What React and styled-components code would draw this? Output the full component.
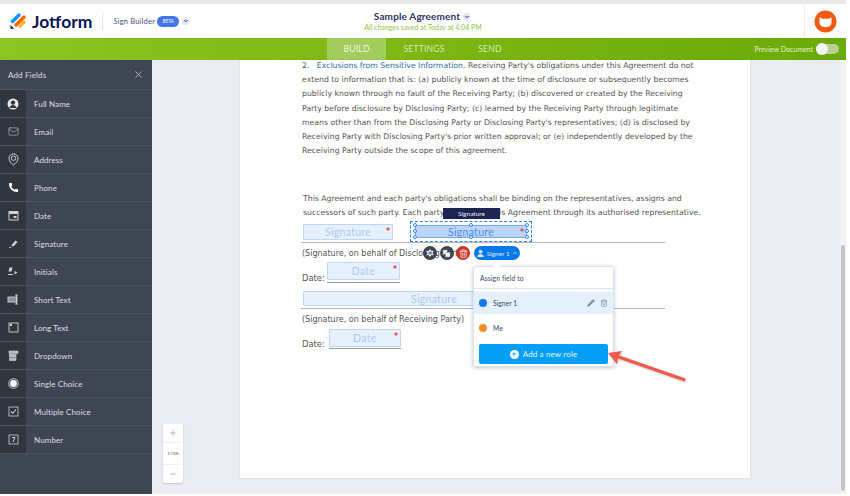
import React from "react";
import styled, { createGlobalStyle } from "styled-components";
import { Plus, Minus, X, Mail, Phone, Pencil, Trash2, User, Copy, Settings, ChevronDown, ChevronUp } from "lucide-react";

const GlobalStyle = createGlobalStyle`
    html, body {
        margin: 0;
        background: #fff;
        overflow: hidden;
    }
    * { box-sizing: border-box; }
`;

const Page = styled.div`
    width: 846px;
    height: 494px;
    display: flex;
    flex-direction: column;
    font-family: Lato, "Noto Sans", sans-serif;
    overflow: hidden;
`;

const TopStrip = styled.div`
    height: 4px;
    background: #e9e9ec;
    flex: none;
`;

const Header = styled.header`
    height: 34px;
    flex: none;
    display: grid;
    grid-template-columns: 1fr auto 1fr;
    align-items: center;
    background: #fff;
`;

const Brand = styled.div`
    display: flex;
    align-items: center;
    padding-left: 9px;
`;

const LogoName = styled.span`
    font-size: 17.5px;
    font-weight: 700;
    color: #0a1551;
    margin-left: 5px;
    letter-spacing: 0;
`;

const Divider = styled.span`
    width: 1px;
    height: 17px;
    background: #e3e5ee;
    margin: 0 10px;
`;

const Product = styled.span`
    font-size: 7.5px;
    color: #4c5478;
    letter-spacing: 0.2px;
`;

const BetaBadge = styled.span`
    width: 22px;
    height: 11px;
    margin-left: 2px;
    border-radius: 6px;
    background: #4277ea;
    color: #fff;
    font-size: 5px;
    font-style: italic;
    display: flex;
    align-items: center;
    justify-content: center;
`;

const RoundChevron = styled.span`
    width: 7px;
    height: 7px;
    margin-left: 3px;
    border-radius: 50%;
    background: #e0e3f0;
    color: #0a1551;
    display: inline-flex;
    align-items: center;
    justify-content: center;
`;

const TitleBlock = styled.div`
    text-align: center;
`;

const TitleRow = styled.div`
    display: flex;
    align-items: center;
    justify-content: center;
    font-size: 10px;
    font-weight: 700;
    color: #2f3565;
    letter-spacing: 0.15px;
    line-height: 13px;
    margin-left: -2px;
`;

const Saved = styled.div`
    font-size: 7px;
    line-height: 9px;
    color: #8cc548;
`;

const HeaderEnd = styled.div`
    justify-self: end;
    align-self: stretch;
    width: 42px;
    border-left: 1px solid #eeeef4;
    display: flex;
    align-items: center;
    justify-content: center;
    padding-top: 1px;
`;

const GreenBar = styled.nav`
    height: 22px;
    flex: none;
    display: flex;
    align-items: stretch;
    padding-left: 327px;
    background: linear-gradient(90deg, #8cc522 0%, #7db615 50%, #6aaa08 100%);
`;

const Tab = styled.div`
    width: ${(p) => p.$w}px;
    display: flex;
    align-items: center;
    justify-content: center;
    font-size: 8.5px;
    letter-spacing: 0.25px;
    color: ${(p) => (p.$active ? "#f1f7e2" : "#d6e9ad")};
    background: ${(p) => (p.$active ? "#a2cd5c" : "transparent")};
`;

const PreviewGroup = styled.div`
    margin-left: auto;
    display: flex;
    align-items: center;
    padding-right: 7px;
    font-size: 7px;
    color: #e6f1d0;
`;

const Toggle = styled.span`
    width: 23px;
    height: 10px;
    margin-left: 3px;
    border-radius: 6px;
    background: #b9cf93;
    display: flex;
    align-items: center;
    &::before {
        content: "";
        width: 12px;
        height: 12px;
        border-radius: 50%;
        background: #f2f3fb;
    }
`;

const Main = styled.main`
    flex: 1;
    min-height: 0;
    display: flex;
`;

const Sidebar = styled.aside`
    width: 152px;
    flex: none;
    background: #3f4653;
    color: #dcdee2;
`;

const SidebarHead = styled.div`
    height: 30px;
    display: flex;
    align-items: center;
    justify-content: space-between;
    padding: 0 8px;
    font-size: 8px;
    letter-spacing: 0.15px;
    border-bottom: 1px solid #4a515e;
`;

const FieldRow = styled.div`
    height: 28px;
    display: flex;
    align-items: center;
    font-size: 8px;
    letter-spacing: 0.1px;
    border-bottom: 1px solid #4a515e;
`;

const FieldIcon = styled.span`
    width: 26px;
    align-self: stretch;
    flex: none;
    background: #30353e;
    display: flex;
    align-items: center;
    justify-content: center;
    margin-right: 8px;
    color: #cfd1d6;
`;

const Canvas = styled.section`
    position: relative;
    flex: 1;
    background: #ebecf1;
    padding-left: 88px;
    display: flex;
`;

const Sheet = styled.article`
    position: relative;
    width: 510px;
    height: 418px;
    background: #fff;
    padding: 0 54px 0 62px;
    box-shadow: 0 0 2px rgba(80, 85, 100, 0.15);
    font-family: "DejaVu Sans", Verdana, sans-serif;
    font-size: 7.75px;
    color: #555;
`;

const Clause = styled.p`
    margin: -1px 0 34px 0;
    line-height: 14.17px;
    white-space: nowrap;
    height: 99px;
`;

const ClauseTitle = styled.span`
    color: #2f6f9f;
`;

const Paragraph = styled.p`
    margin: 0 -10px 4px 1px;
    line-height: 14px;
    white-space: nowrap;
`;

const SignRow = styled.div`
    display: flex;
    gap: 17px;
    height: ${(p) => p.$h}px;
    padding-left: 2px;
    border-bottom: 1.5px solid #b5b5b5;
    margin-left: -1px;
    width: 364px;
`;

const FieldBox = styled.div`
    position: relative;
    flex: none;
    width: ${(p) => p.$w || 90}px;
    height: ${(p) => p.$h || 16}px;
    background: ${(p) => (p.$selected ? "#bcd6fb" : "#e7f1fe")};
    border: 1px solid ${(p) => (p.$selected ? "#77a8ee" : "#bdd7f9")};
    border-radius: 1px;
    color: ${(p) => (p.$selected ? "#4f8fe6" : "#a9cbf6")};
    font-family: Lato, "Noto Sans", sans-serif;
    font-size: 10.5px;
    letter-spacing: 0.3px;
    display: flex;
    align-items: center;
    justify-content: center;
    ${(p) =>
        p.$required &&
        `&::after {
            content: "*";
            position: absolute;
            top: 2px;
            right: 1px;
            color: #e5383f;
            font-size: 12px;
            font-weight: 700;
            line-height: 10px;
        }`}
`;

const SelectFrame = styled.div`
    position: relative;
    margin-top: -3px;
    width: 122px;
    height: 21px;
    padding: 3px 4px;
    border: 1px dashed #2c86f5;
`;

const Handle = styled.i`
    position: absolute;
    width: 4px;
    height: 4px;
    border-radius: 50%;
    background: #fff;
    border: 1px solid #2c86f5;
    left: ${(p) => p.$x}px;
    top: ${(p) => p.$y}px;
`;

const Caption = styled.div`
    margin: 5px 0 2px 0;
    font-size: 8px;
    line-height: 12px;
    height: 12px;
    white-space: nowrap;
`;

const DateRow = styled.div`
    display: flex;
    align-items: flex-end;
    gap: ${(p) => p.$gap}px;
    height: 21px;
    margin-bottom: ${(p) => p.$after || 0}px;
    font-size: 8.4px;
`;

const DateSlot = styled.div`
    border-bottom: 1px solid #9a9a9a;
    padding-bottom: ${(p) => p.$pad}px;
`;

const Tooltip = styled.div`
    position: absolute;
    left: 203px;
    top: 148px;
    width: 57px;
    height: 11px;
    background: #1d2450;
    color: #e8eaf4;
    font-family: Lato, sans-serif;
    font-size: 6.5px;
    display: flex;
    align-items: center;
    justify-content: center;
`;

const ActionBar = styled.div`
    position: absolute;
    left: 183px;
    top: 186px;
    display: flex;
    align-items: center;
    gap: 2.6px;
`;

const RoundAction = styled.span`
    width: 14px;
    height: 14px;
    border-radius: 50%;
    background: ${(p) => p.$bg || "#3f4653"};
    color: #fff;
    display: flex;
    align-items: center;
    justify-content: center;
`;

const SignerPill = styled.span`
    width: 46px;
    height: 14px;
    margin-left: 1px;
    border-radius: 7px;
    background: #0b78e8;
    color: #dcebff;
    font-family: Lato, sans-serif;
    font-size: 6.5px;
    display: flex;
    align-items: center;
    justify-content: center;
    gap: 2px;
`;

const Popover = styled.div`
    position: absolute;
    left: 233px;
    top: 206px;
    width: 141px;
    height: 101px;
    background: #fff;
    border: 1px solid #dfe2ea;
    border-radius: 2px;
    box-shadow: 0 1px 4px rgba(60, 70, 100, 0.3);
    font-family: Lato, sans-serif;
    font-size: 6.8px;
    color: #3e4766;
    &::before {
        content: "";
        position: absolute;
        left: 21px;
        top: -3px;
        width: 5px;
        height: 5px;
        background: #fff;
        transform: rotate(45deg);
    }
`;

const PopoverHead = styled.div`
    height: 22px;
    padding-left: 6px;
    display: flex;
    align-items: center;
    border-bottom: 1px solid #dfe2ea;
    letter-spacing: 0.1px;
`;

const RoleRow = styled.div`
    height: ${(p) => p.$h}px;
    margin-top: ${(p) => p.$top || 0}px;
    padding: 0 5px;
    display: flex;
    align-items: center;
    background: ${(p) => (p.$active ? "#e5f0fd" : "transparent")};
`;

const RoleDot = styled.span`
    width: 8px;
    height: 8px;
    border-radius: 50%;
    margin-right: 6px;
    background: ${(p) => p.$color};
`;

const RoleTools = styled.span`
    margin-left: auto;
    display: flex;
    gap: 5px;
    color: #8a8e98;
`;

const AddRole = styled.div`
    margin: 3px 5px 0 5px;
    height: 20px;
    background: #079ff5;
    border-radius: 2px;
    color: #e6f5ff;
    font-size: 8px;
    letter-spacing: 0.15px;
    display: flex;
    align-items: center;
    justify-content: center;
    gap: 4px;
`;

const PlusDisc = styled.span`
    width: 9px;
    height: 9px;
    border-radius: 50%;
    background: #fff;
    color: #079ff5;
    display: flex;
    align-items: center;
    justify-content: center;
`;

const Arrow = styled.svg`
    position: absolute;
    left: 364px;
    top: 285px;
    overflow: visible;
    filter: drop-shadow(1px 1px 1px rgba(70, 60, 60, 0.35));
`;

const ZoomBox = styled.div`
    position: absolute;
    left: 11px;
    top: 364px;
    width: 20px;
    height: 59px;
    background: #fff;
    border-radius: 2px;
    box-shadow: 0 1px 2px rgba(70, 75, 95, 0.25);
    color: #9297a8;
    display: flex;
    flex-direction: column;
`;

const ZoomCell = styled.div`
    flex: ${(p) => p.$grow || 1};
    display: flex;
    align-items: center;
    justify-content: center;
    font-size: 4.5px;
    color: ${(p) => (p.$label ? "#555a66" : "#9297a8")};
    border-bottom: ${(p) => (p.$line ? "1px solid #f0f0f4" : "none")};
`;

const ScrollTrack = styled.div`
    position: absolute;
    right: 0;
    top: 0;
    bottom: 0;
    width: 6px;
    background: #f3f3f6;
    display: flex;
    flex-direction: column;
    justify-content: flex-end;
    padding: 0 1px 3px 1px;
`;

const ScrollThumb = styled.div`
    height: 246px;
    background: #c4c5c9;
    border-radius: 2px;
`;

const JotformLogo = () => (
    <svg width="18" height="18" viewBox="0 0 18 18">
        <path d="M3.5 9.5 10 3" stroke="#0099ff" strokeWidth="3.4" strokeLinecap="round" />
        <path d="M7 13 15 5" stroke="#ff6100" strokeWidth="3.4" strokeLinecap="round" />
        <path d="M11 14 15 10" stroke="#ffb629" strokeWidth="3.4" strokeLinecap="round" />
        <path d="M1.5 13v3.2a.6.6 0 0 0 .6.6h3.2z" fill="#0a1551" />
    </svg>
);

const CatAvatar = () => (
    <svg width="23" height="23" viewBox="0 0 23 23">
        <circle cx="11.5" cy="11.5" r="11" fill="#f05a13" />
        <path d="M5.500 7.500 8.500 8.800h6l3-1.300v5.300c0 2.700-2.700 4.400-6 4.400s-6-1.700-6-4.400z" fill="#fff" />
    </svg>
);

const PersonDisc = () => (
    <svg width="12" height="12" viewBox="0 0 12 12">
        <circle cx="6" cy="6" r="5.500" fill="#e8e9ec" />
        <circle cx="6" cy="4.600" r="2.200" fill="#30353e" />
        <path d="M2.500 10c.5-2.200 2-3 3.500-3s3 .8 3.500 3z" fill="#30353e" />
    </svg>
);

const PinIcon = () => (
    <svg width="11" height="13" viewBox="0 0 11 13" fill="none" stroke="currentColor">
        <path d="M5.500 12C3 10 1 8 1 5.400a4.500 4.500 0 0 1 9 0C10 8 8 10 5.500 12z" />
        <circle cx="5.500" cy="5.200" r="2.200" />
    </svg>
);

const CalendarIcon = () => (
    <svg width="11" height="11" viewBox="0 0 11 11">
        <rect x="1" y="1.500" width="9" height="8.500" fill="none" stroke="currentColor" />
        <rect x="1" y="1.500" width="9" height="2.500" fill="currentColor" />
        <rect x="5.500" y="6" width="3" height="2" fill="currentColor" />
    </svg>
);

const SignIcon = () => (
    <svg width="11" height="11" viewBox="0 0 11 11" fill="currentColor">
        <path d="M4 6.500 7.500 2.500l2 1.500-3.500 4-2.500.5z" />
        <path d="M1 9.500h2" stroke="currentColor" strokeWidth="0.8" />
    </svg>
);

const InitialsIcon = () => (
    <svg width="12" height="11" viewBox="0 0 12 11" fill="currentColor">
        <path d="M2.500 1.500h3l-1 4h-3zM7.500 5l3 1.500-3 2z" />
        <path d="M1 8.500h5" stroke="currentColor" strokeWidth="1" />
    </svg>
);

const ShortTextIcon = () => (
    <svg width="12" height="11" viewBox="0 0 12 11" fill="none" stroke="currentColor" strokeWidth="0.9">
        <rect x="1" y="3" width="9" height="5" fill="#8b8e95" />
        <path d="M9.500 1v9M8 1h3M8 10h3" />
    </svg>
);

const LongTextIcon = () => (
    <svg width="11" height="11" viewBox="0 0 11 11" fill="none" stroke="currentColor" strokeWidth="0.9">
        <rect x="1" y="1" width="9" height="9" />
        <rect x="2" y="2" width="2" height="2" fill="currentColor" stroke="none" />
    </svg>
);

const DropdownIcon = () => (
    <svg width="11" height="11" viewBox="0 0 11 11" fill="#b4b6bb" stroke="currentColor" strokeWidth="0.6">
        <rect x="1" y="1" width="9" height="2.500" />
        <rect x="1.500" y="4.500" width="6.500" height="2.500" />
        <rect x="1.500" y="8" width="6.500" height="2.500" />
    </svg>
);

const RadioIcon = () => (
    <svg width="11" height="11" viewBox="0 0 11 11">
        <circle cx="5.500" cy="5.500" r="4.800" fill="none" stroke="#a5a8ae" strokeWidth="1.200" />
        <circle cx="5.500" cy="5.500" r="3.400" fill="#fff" />
    </svg>
);

const CheckIcon = () => (
    <svg width="11" height="11" viewBox="0 0 11 11" fill="none" stroke="currentColor">
        <rect x="1" y="1" width="9" height="9" strokeWidth="0.8" />
        <path d="M3 5.500 4.800 7.300 8 3.500" strokeWidth="1.100" />
    </svg>
);

const NumberIcon = () => (
    <svg width="11" height="11" viewBox="0 0 11 11" fill="none" stroke="currentColor">
        <rect x="1" y="1" width="9" height="9" strokeWidth="0.8" />
        <path d="M4 3.500h3L5 8" strokeWidth="1" />
    </svg>
);

const FIELDS = [
    ["Full Name", <PersonDisc />],
    ["Email", <Mail size={11} strokeWidth={1.2} />],
    ["Address", <PinIcon />],
    ["Phone", <Phone size={11} fill="#fff" strokeWidth={0} />],
    ["Date", <CalendarIcon />],
    ["Signature", <SignIcon />],
    ["Initials", <InitialsIcon />],
    ["Short Text", <ShortTextIcon />],
    ["Long Text", <LongTextIcon />],
    ["Dropdown", <DropdownIcon />],
    ["Single Choice", <RadioIcon />],
    ["Multiple Choice", <CheckIcon />],
    ["Number", <NumberIcon />],
];

const HANDLES = [
    [2, 1], [58, 1], [114, 1],
    [2, 7], [114, 7],
    [2, 13], [58, 13], [114, 13],
];

const App = () => {
    return (
        <Page>
            <GlobalStyle />
            <TopStrip />
            <Header>
                <Brand>
                    <JotformLogo />
                    <LogoName>Jotform</LogoName>
                    <Divider />
                    <Product>Sign Builder</Product>
                    <BetaBadge>BETA</BetaBadge>
                    <RoundChevron>
                        <ChevronDown size={6} strokeWidth={3} />
                    </RoundChevron>
                </Brand>
                <TitleBlock>
                    <TitleRow>
                        Sample Agreement
                        <RoundChevron>
                            <ChevronDown size={6} strokeWidth={3} />
                        </RoundChevron>
                    </TitleRow>
                    <Saved>All changes saved at Today at 4:04 PM</Saved>
                </TitleBlock>
                <HeaderEnd>
                    <CatAvatar />
                </HeaderEnd>
            </Header>
            <GreenBar>
                <Tab $w={59} $active>BUILD</Tab>
                <Tab $w={76}>SETTINGS</Tab>
                <Tab $w={56}>SEND</Tab>
                <PreviewGroup>
                    Preview Document
                    <Toggle />
                </PreviewGroup>
            </GreenBar>
            <Main>
                <Sidebar>
                    <SidebarHead>
                        Add Fields
                        <X size={11} strokeWidth={1.5} />
                    </SidebarHead>
                    {FIELDS.map(([label, icon]) => (
                        <FieldRow key={label}>
                            <FieldIcon>{icon}</FieldIcon>
                            {label}
                        </FieldRow>
                    ))}
                </Sidebar>
                <Canvas>
                    <Sheet>
                        <Clause>
                            2.&nbsp;&nbsp; <ClauseTitle>Exclusions from Sensitive Information.</ClauseTitle> Receiving Party's obligations under this Agreement do not
                            <br />
                            extend to information that is: (a) publicly known at the time of disclosure or subsequently becomes
                            <br />
                            publicly known through no fault of the Receiving Party; (b) discovered or created by the Receiving
                            <br />
                            Party before disclosure by Disclosing Party; (c) learned by the Receiving Party through legitimate
                            <br />
                            means other than from the Disclosing Party or Disclosing Party's representatives; (d) is disclosed by
                            <br />
                            Receiving Party with Disclosing Party's prior written approval; or (e) independently developed by the
                            <br />
                            Receiving Party outside the scope of this agreement.
                        </Clause>
                        <Paragraph>
                            This Agreement and each party's obligations shall be binding on the representatives, assigns and
                            <br />
                            successors of such party. Each party has signed this Agreement through its authorised representative.
                        </Paragraph>
                        <SignRow $h={19}>
                            <FieldBox $required>Signature</FieldBox>
                            <SelectFrame>
                                <FieldBox $selected $required $w={112} $h={13}>Signature</FieldBox>
                                {HANDLES.map(([x, y]) => (
                                    <Handle key={`${x}-${y}`} $x={x} $y={y} />
                                ))}
                            </SelectFrame>
                        </SignRow>
                        <Caption>(Signature, on behalf of Disclosing Party)</Caption>
                        <DateRow $gap={2} $after={8}>
                            Date:
                            <DateSlot $pad={2}>
                                <FieldBox $w={73} $h={18} $required>Date</FieldBox>
                            </DateSlot>
                        </DateRow>
                        <SignRow $h={18}>
                            <FieldBox $w={262} $h={15}>Signature</FieldBox>
                        </SignRow>
                        <Caption>(Signature, on behalf of Receiving Party)</Caption>
                        <DateRow $gap={4}>
                            Date:
                            <DateSlot $pad={1}>
                                <FieldBox $w={72} $h={18} $required>Date</FieldBox>
                            </DateSlot>
                        </DateRow>
                        <Tooltip>Signature</Tooltip>
                        <ActionBar>
                            <RoundAction>
                                <Settings size={10} fill="#fff" stroke="#3f4653" />
                            </RoundAction>
                            <RoundAction>
                                <Copy size={9} fill="#fff" stroke="#3f4653" />
                            </RoundAction>
                            <RoundAction $bg="#c8372d">
                                <Trash2 size={9} />
                            </RoundAction>
                            <SignerPill>
                                <User size={9} fill="currentColor" />
                                Signer 1
                                <ChevronUp size={6} strokeWidth={3} />
                            </SignerPill>
                        </ActionBar>
                        <Popover>
                            <PopoverHead>Assign field to</PopoverHead>
                            <RoleRow $active $top={3} $h={22}>
                                <RoleDot $color="#0b78f0" />
                                Signer 1
                                <RoleTools>
                                    <Pencil size={8} fill="currentColor" />
                                    <Trash2 size={8} />
                                </RoleTools>
                            </RoleRow>
                            <RoleRow $h={27}>
                                <RoleDot $color="#f58a2b" />
                                Me
                            </RoleRow>
                            <AddRole>
                                <PlusDisc>
                                    <Plus size={6} strokeWidth={3} />
                                </PlusDisc>
                                Add a new role
                            </AddRole>
                        </Popover>
                        <Arrow width="90" height="40" viewBox="0 0 90 40">
                            <path d="M81 35 12 11" stroke="#f0594c" strokeWidth="3" fill="none" />
                            <path d="M4 8 18 6 14 11.500 13 19z" fill="#f0594c" />
                        </Arrow>
                    </Sheet>
                    <ZoomBox>
                        <ZoomCell $line>
                            <Plus size={8} />
                        </ZoomCell>
                        <ZoomCell $line $label $grow={1.2}>175%</ZoomCell>
                        <ZoomCell>
                            <Minus size={8} />
                        </ZoomCell>
                    </ZoomBox>
                    <ScrollTrack>
                        <ScrollThumb />
                    </ScrollTrack>
                </Canvas>
            </Main>
        </Page>
    );
};

export default App;
